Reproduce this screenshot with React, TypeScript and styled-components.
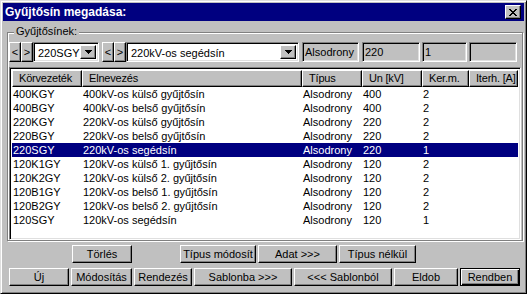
import React from "react";
import styled, { createGlobalStyle, css } from "styled-components";

const GlobalStyle = createGlobalStyle`
  html, body {
    margin: 0;
    padding: 0;
    background: #c0c0c0;
  }
  body {
    font-family: "Liberation Sans", Arial, sans-serif;
    font-size: 11px;
    color: #000;
  }
  * {
    box-sizing: border-box;
  }
`;

const raised = css`
  border: 1px solid;
  border-color: #fff #000 #000 #fff;
  box-shadow: inset -1px -1px 0 #808080;
`;

const sunken = css`
  border: 1px solid;
  border-color: #808080 #fff #fff #808080;
  box-shadow: inset 1px 1px 0 #000, inset -1px -1px 0 #dfdfdf;
`;

const Window = styled.div`
  width: 527px;
  height: 294px;
  background: #c0c0c0;
  border: 1px solid;
  border-color: #dfdfdf #000 #000 #dfdfdf;
  box-shadow: inset 1px 1px 0 #fff, inset -1px -1px 0 #808080;
  padding: 2px;
  display: flex;
  flex-direction: column;
  overflow: hidden;
`;

const TitleBar = styled.div`
  height: 18px;
  flex: none;
  background: #000080;
  color: #fff;
  font-size: 12px;
  font-weight: bold;
  display: flex;
  align-items: center;
  justify-content: space-between;
  padding: 0 3px 0 2px;
`;

const CloseButton = styled.div`
  ${raised};
  width: 16px;
  height: 14px;
  background: #c0c0c0;
  display: flex;
  align-items: center;
  justify-content: center;
  svg {
    display: block;
  }
`;

const GroupBox = styled.div`
  position: relative;
  margin: 11px 1px 0 4px;
  border: 1px solid #808080;
  box-shadow: inset 1px 1px 0 #fff, 1px 1px 0 #fff;
  padding: 9px 1px 0 1px;
`;

const Legend = styled.span`
  position: absolute;
  top: -8px;
  left: 6px;
  padding: 0 2px;
  line-height: 13px;
  background: #c0c0c0;
`;

const Toolbar = styled.div`
  height: 20px;
  display: flex;
`;

const SpinButton = styled.div`
  ${raised};
  width: 12px;
  background: #c0c0c0;
  display: flex;
  align-items: center;
  justify-content: center;
  line-height: 1;
`;

const Combo = styled.div<{ $w: number }>`
  ${sunken};
  width: ${({ $w }) => $w}px;
  background: #fff;
  display: flex;
  align-items: stretch;
  padding: 2px;
  margin-right: 3px;
`;

const ComboText = styled.div`
  flex: 1;
  padding-left: 2px;
  line-height: 16px;
  white-space: nowrap;
  overflow: hidden;
`;

const DropButton = styled.div`
  ${raised};
  width: 16px;
  background: #c0c0c0;
  display: flex;
  align-items: center;
  justify-content: center;
`;

const Field = styled.div<{ $w: number; $gap: number }>`
  ${sunken};
  width: ${({ $w }) => $w}px;
  margin-right: ${({ $gap }) => $gap}px;
  padding-left: 2px;
  line-height: 18px;
  white-space: nowrap;
  overflow: hidden;
`;

const List = styled.div`
  ${sunken};
  margin-top: 5px;
  height: 173px;
  background: #fff;
  padding: 2px;
  display: flex;
  flex-direction: column;
  overflow: hidden;
`;

const HeaderRow = styled.div`
  display: flex;
  height: 17px;
  flex: none;
`;

const HeaderCell = styled.div<{ $w: number }>`
  ${raised};
  width: ${({ $w }) => $w}px;
  background: #c0c0c0;
  padding-left: 6px;
  line-height: 15px;
  white-space: nowrap;
  overflow: hidden;
  letter-spacing: -0.2px;
`;

const Row = styled.div<{ $selected?: boolean }>`
  display: flex;
  height: 14px;
  flex: none;
  background: ${({ $selected }) => ($selected ? "#000080" : "transparent")};
  color: ${({ $selected }) => ($selected ? "#fff" : "#000")};
`;

const Cell = styled.div<{ $w: number }>`
  width: ${({ $w }) => $w}px;
  padding-left: 1px;
  line-height: 14px;
  white-space: nowrap;
  overflow: hidden;
`;

const ButtonRow = styled.div<{ $top: number; $left: number }>`
  display: flex;
  gap: 2px;
  height: 18px;
  margin-top: ${({ $top }) => $top}px;
  padding-left: ${({ $left }) => $left}px;
`;

const Button = styled.div<{ $w: number; $default?: boolean; $push?: number }>`
  ${raised};
  width: ${({ $w }) => $w}px;
  margin-left: ${({ $push }) => $push ?? 0}px;
  background: #c0c0c0;
  display: flex;
  align-items: center;
  justify-content: center;
  white-space: nowrap;
  ${({ $default }) =>
    $default &&
    css`
      border: 1px solid #000;
      box-shadow: inset 1px 1px 0 #fff, inset -1px -1px 0 #000,
        inset -2px -2px 0 #808080;
    `}
`;

const CloseIcon = () => (
  <svg width="8" height="7" viewBox="0 0 8 7" shapeRendering="crispEdges">
    <path
      fill="#000"
      d="M0 0h2v1H0zM6 0h2v1H6zM1 1h2v1H1zM5 1h2v1H5zM2 2h4v1H2zM3 3h2v1H3zM2 4h4v1H2zM1 5h2v1H1zM5 5h2v1H5zM0 6h2v1H0zM6 6h2v1H6z"
    />
  </svg>
);

const ArrowDown = () => (
  <svg width="7" height="4" viewBox="0 0 7 4" shapeRendering="crispEdges">
    <path fill="#000" d="M0 0h7v1H0zM1 1h5v1H1zM2 2h3v1H2zM3 3h1v1H3z" />
  </svg>
);

const columns = [
  { title: "Körvezeték", w: 70 },
  { title: "Elnevezés", w: 220 },
  { title: "Típus", w: 60 },
  { title: "Un [kV]", w: 60 },
  { title: "Ker.m.", w: 47 },
  { title: "Iterh. [A]", w: 49 },
];

const rows = [
  ["400KGY", "400kV-os külső gyűjtősín", "Alsodrony", "400", "2", ""],
  ["400BGY", "400kV-os belső gyűjtősín", "Alsodrony", "400", "2", ""],
  ["220KGY", "220kV-os külső gyűjtősín", "Alsodrony", "220", "2", ""],
  ["220BGY", "220kV-os belső gyűjtősín", "Alsodrony", "220", "2", ""],
  ["220SGY", "220kV-os segédsín", "Alsodrony", "220", "1", ""],
  ["120K1GY", "120kV-os külső 1. gyűjtősín", "Alsodrony", "120", "2", ""],
  ["120K2GY", "120kV-os külső 2. gyűjtősín", "Alsodrony", "120", "2", ""],
  ["120B1GY", "120kV-os belső 1. gyűjtősín", "Alsodrony", "120", "2", ""],
  ["120B2GY", "120kV-os belső 2. gyűjtősín", "Alsodrony", "120", "2", ""],
  ["120SGY", "120kV-os segédsín", "Alsodrony", "120", "1", ""],
];

const selectedIndex = 4;

const App: React.FC = () => (
  <>
    <GlobalStyle />
    <Window>
      <TitleBar>
        <span>Gyűjtősín megadása:</span>
        <CloseButton>
          <CloseIcon />
        </CloseButton>
      </TitleBar>

      <GroupBox>
        <Legend>Gyűjtősínek:</Legend>
        <Toolbar>
          <SpinButton>&lt;</SpinButton>
          <SpinButton>&gt;</SpinButton>
          <Combo $w={66}>
            <ComboText>220SGY</ComboText>
            <DropButton>
              <ArrowDown />
            </DropButton>
          </Combo>
          <SpinButton>&lt;</SpinButton>
          <SpinButton>&gt;</SpinButton>
          <Combo $w={173}>
            <ComboText>220kV-os segédsín</ComboText>
            <DropButton>
              <ArrowDown />
            </DropButton>
          </Combo>
          <Field $w={57} $gap={3}>Alsodrony</Field>
          <Field $w={58} $gap={2}>220</Field>
          <Field $w={45} $gap={2}>1</Field>
          <Field $w={48} $gap={0} />
        </Toolbar>

        <List>
          <HeaderRow>
            {columns.map((c) => (
              <HeaderCell key={c.title} $w={c.w}>
                {c.title}
              </HeaderCell>
            ))}
          </HeaderRow>
          {rows.map((r, i) => (
            <Row key={r[0]} $selected={i === selectedIndex}>
              {r.map((v, j) => (
                <Cell key={j} $w={columns[j].w}>
                  {v}
                </Cell>
              ))}
            </Row>
          ))}
        </List>
      </GroupBox>

      <ButtonRow $top={4} $left={69}>
        <Button $w={60}>Törlés</Button>
        <Button $w={76} $push={46}>
          Típus módosít
        </Button>
        <Button $w={79}>Adat &gt;&gt;&gt;</Button>
        <Button $w={77}>Típus nélkül</Button>
      </ButtonRow>

      <ButtonRow $top={5} $left={6}>
        <Button $w={60}>Új</Button>
        <Button $w={61}>Módosítás</Button>
        <Button $w={58}>Rendezés</Button>
        <Button $w={98}>Sablonba &gt;&gt;&gt;</Button>
        <Button $w={98}>&lt;&lt;&lt; Sablonból</Button>
        <Button $w={64}>Eldob</Button>
        <Button $w={60} $default>
          Rendben
        </Button>
      </ButtonRow>
    </Window>
  </>
);

export default App;
